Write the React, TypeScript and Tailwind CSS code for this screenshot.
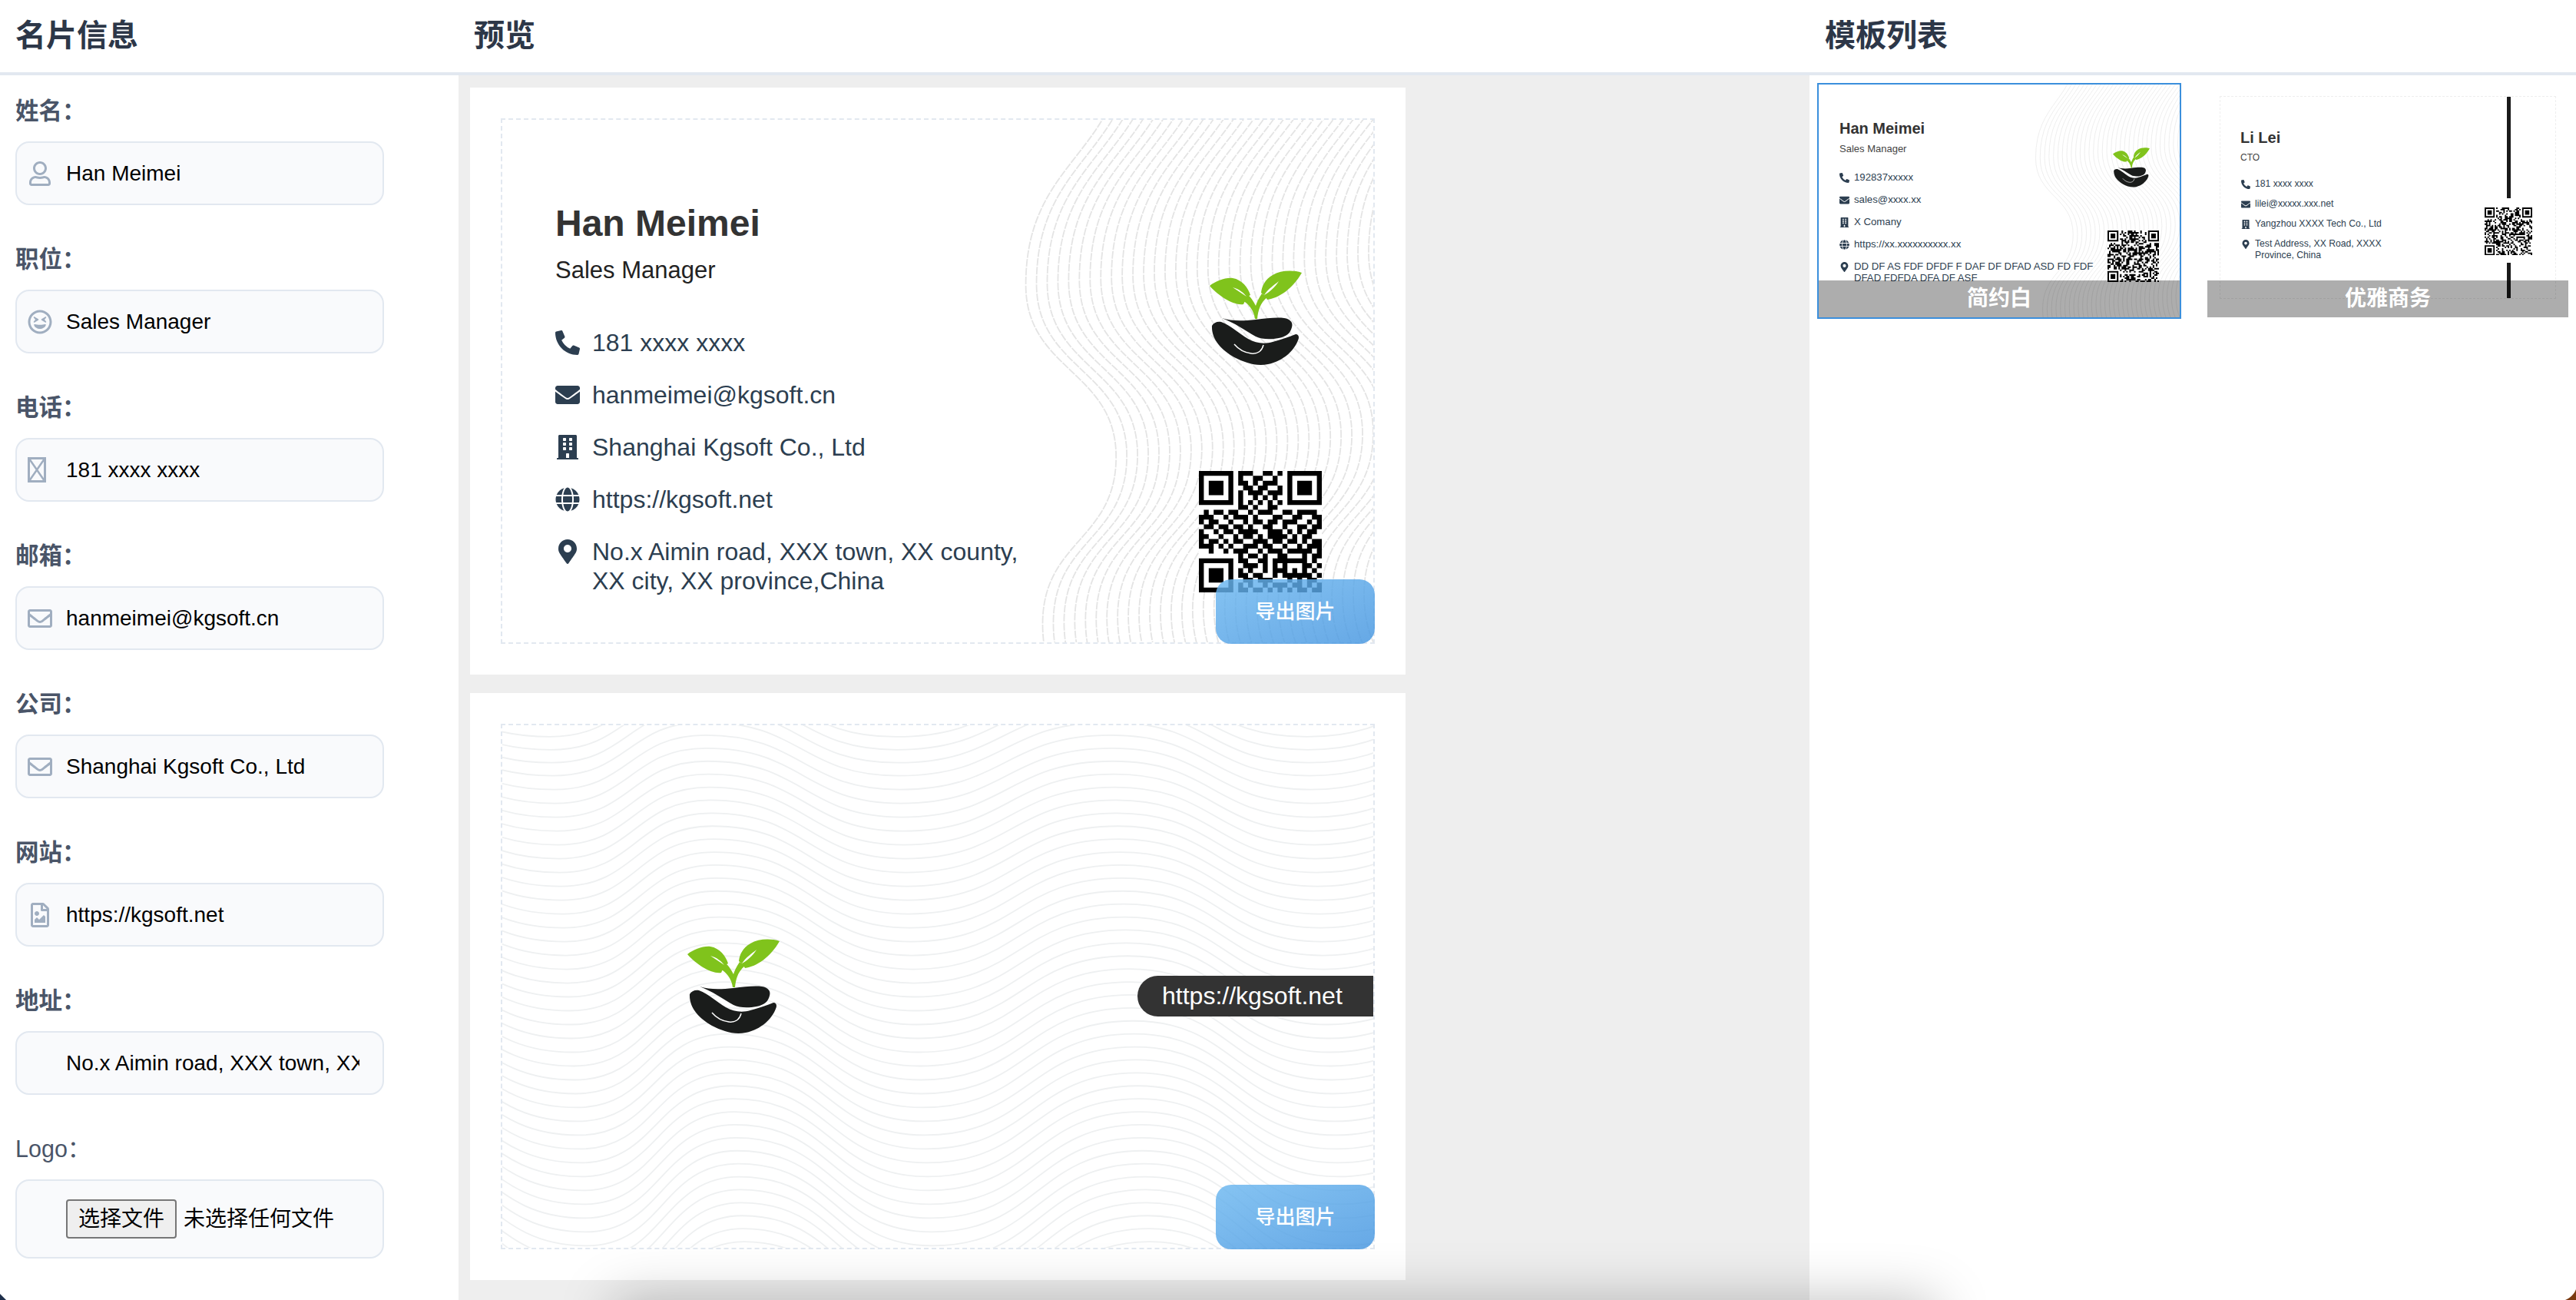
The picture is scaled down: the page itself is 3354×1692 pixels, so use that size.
import type { ReactNode } from "react";
import {
  FaBuilding,
  FaEnvelope,
  FaGlobe,
  FaMapMarkerAlt,
  FaPhoneAlt,
  FaRegEnvelope,
  FaRegFileImage,
  FaRegGrinSquint,
  FaRegUser,
} from "react-icons/fa";

const QR_MAIN = [
  "1111111011100110101111111",
  "1000001010011001001000001",
  "1011101011010111001011101",
  "1011101001101100101011101",
  "1011101010111011101011101",
  "1000001010010101001000001",
  "1111111010101010101111111",
  "0000000011010011000000000",
  "0101101100101110011011110",
  "1110010111010001100110011",
  "1011001001011011011100101",
  "0110110110100110010011011",
  "1001011011110011101010110",
  "1100100101101011110101100",
  "1011010110011101101101011",
  "1110101001110110010010111",
  "0010010111001011101111101",
  "0000000010110100110001011",
  "1111111011001101111111010",
  "1000001001110101010001101",
  "1011101010100101110101010",
  "1011101011011001011111101",
  "1011101001101110001010110",
  "1000001010100101110110101",
  "1111111011011010101011011",
];

// thumbnails just need something qr-looking, denser than the big one
function fakeQr(n: number, seed: number) {
  const rows: string[] = [];
  let s = seed;
  for (let y = 0; y < n; y++) {
    let row = "";
    for (let x = 0; x < n; x++) {
      s = (s * 1103515245 + 12345) & 0x7fffffff;
      let bit = (s >> 16) & 1;
      const corners = [
        [0, 0],
        [n - 7, 0],
        [0, n - 7],
      ];
      for (const [cx, cy] of corners) {
        const dx = x - cx;
        const dy = y - cy;
        if (dx >= -1 && dx <= 7 && dy >= -1 && dy <= 7) {
          const inside = dx >= 0 && dx <= 6 && dy >= 0 && dy <= 6;
          const ring = dx === 0 || dx === 6 || dy === 0 || dy === 6;
          const core = dx >= 2 && dx <= 4 && dy >= 2 && dy <= 4;
          bit = inside && (ring || core) ? 1 : 0;
        }
      }
      row += bit;
    }
    rows.push(row);
  }
  return rows;
}

const QR_THUMB_A = fakeQr(33, 77);
const QR_THUMB_B = fakeQr(33, 4242);

function Qr({ rows, className }: { rows: string[]; className: string }) {
  const n = rows.length;
  let d = "";
  rows.forEach((row, y) => {
    row.split("").forEach((c, x) => {
      if (c === "1") d += `M${x} ${y}h1v1h-1z`;
    });
  });
  return (
    <svg viewBox={`0 0 ${n} ${n}`} preserveAspectRatio="none" className={className}>
      <rect width={n} height={n} fill="#fff" />
      <path d={d} fill="#000" />
    </svg>
  );
}

function Logo({ className }: { className: string }) {
  return (
    <svg viewBox="0 0 120 124" preserveAspectRatio="none" className={className}>
      <path
        d="M0 20C8 14 20 9 30 10C42 12 50 22 53 32C48 34 46 40 44 44C32 46 12 34 0 20Z"
        fill="#80c31c"
      />
      <path
        d="M120 3C108 -1 92 0 82 6C72 12 68 20 67 29C70 31 73 34 75 38C90 36 108 24 120 3Z"
        fill="#80c31c"
      />
      <path d="M44 40C52 44 58 54 59 63H62C63 52 66 42 75 35L68 30C64 36 61 42 60 46C57 40 53 34 50 32Z" fill="#80c31c" />
      <path d="M30 22C38 24 44 29 48 34C42 30 36 26 30 22Z" fill="#fff" />
      <path d="M90 14C84 19 76 24 71 32C78 28 85 22 90 14Z" fill="#fff" />
      <path
        d="M16 62C28 66 42 66 60 64C74 62 88 61 97 62C105 63 109 68 107 74C105 82 100 86 90 88C80 90 68 90 60 86C46 78 32 68 16 62Z"
        fill="#1a1c1b"
      />
      <path
        d="M3 72C5 68 10 66 15 67C28 72 38 82 50 89C60 95 72 96 82 93C94 90 104 86 112 83C116 83 117 87 115 91C110 104 96 118 76 122C60 125 46 120 32 113C16 104 2 90 3 72Z"
        fill="#1a1c1b"
      />
      <path
        d="M32 96C38 103 46 107 54 108C62 109 68 105 70 97"
        fill="none"
        stroke="#fff"
        strokeWidth="1.5"
      />
    </svg>
  );
}

// lines run top to bottom and swing left/right, like the card's guilloche
function verticalWavePaths() {
  const out: string[] = [];
  for (let i = 0; i < 36; i++) {
    const dx = i * 14;
    const dy = -1.3 * i;
    const pts = [
      [815 + dx, -120 + dy],
      [684 + dx, 216 + dy],
      [802 + dx, 441 + dy],
      [706 + dx, 660 + dy],
      [790 + dx, 880 + dy],
    ];
    let d = `M${pts[0][0]} ${pts[0][1]}`;
    for (let p = 1; p < pts.length; p++) {
      const ym = (pts[p - 1][1] + pts[p][1]) / 2;
      d += `C${pts[p - 1][0]} ${ym} ${pts[p][0]} ${ym} ${pts[p][0]} ${pts[p][1]}`;
    }
    out.push(d);
  }
  return out;
}

function horizontalWavePaths() {
  const xs = [-199, 66, 264, 518, 794, 1055, 1320];
  const out: string[] = [];
  for (let j = -10; j < 44; j++) {
    const base = j * 17 - 4;
    const dx = j * 1.3;
    const amp = 70 + Math.max(j, 0) * 1.1; // swing gets bigger towards the bottom
    let d = "";
    xs.forEach((x, k) => {
      const px = x + dx;
      const py = base + (k % 2 === 0 ? 0 : amp);
      if (k === 0) {
        d = `M${px} ${py}`;
      } else {
        const prevX = xs[k - 1] + dx;
        const prevY = base + (k % 2 === 0 ? amp : 0);
        const xm = (prevX + px) / 2;
        d += `C${xm} ${prevY} ${xm} ${py} ${px} ${py}`;
      }
    });
    out.push(d);
  }
  return out;
}

const V_WAVES = verticalWavePaths();
const H_WAVES = horizontalWavePaths();

function Waves({
  paths,
  stroke,
  width,
  dash,
}: {
  paths: string[];
  stroke: string;
  width: number;
  dash?: string;
}) {
  return (
    <svg
      viewBox="0 0 1138 684"
      preserveAspectRatio="none"
      className="absolute inset-0 w-full h-full"
    >
      {paths.map((d, i) => (
        <path
          key={i}
          d={d}
          fill="none"
          stroke={stroke}
          strokeWidth={width}
          strokeDasharray={dash}
          vectorEffect="non-scaling-stroke"
        />
      ))}
    </svg>
  );
}

function ExportButton() {
  return (
    <button className="absolute right-[-2px] bottom-[-2px] w-[207px] h-[84px] rounded-[20px] bg-linear-to-br from-[rgba(106,182,239,0.82)] to-[rgba(68,149,224,0.82)] text-white text-[26px] font-medium">
      导出图片
    </button>
  );
}

function TofuIcon() {
  return (
    <svg viewBox="0 0 24 33" className="w-[24px] h-[33px]" fill="none" stroke="#a0aec0">
      <rect x="1.5" y="1.5" width="21" height="30" strokeWidth="3" />
      <path d="M2 2L22 31M22 2L2 31" strokeWidth="2.5" />
    </svg>
  );
}

const fields: { label: string; value: string; icon?: ReactNode }[] = [
  { label: "姓名：", value: "Han Meimei", icon: <FaRegUser size={32} /> },
  { label: "职位：", value: "Sales Manager", icon: <FaRegGrinSquint size={32} /> },
  { label: "电话：", value: "181 xxxx xxxx", icon: <TofuIcon /> },
  { label: "邮箱：", value: "hanmeimei@kgsoft.cn", icon: <FaRegEnvelope size={32} /> },
  { label: "公司：", value: "Shanghai Kgsoft Co., Ltd", icon: <FaRegEnvelope size={32} /> },
  { label: "网站：", value: "https://kgsoft.net", icon: <FaRegFileImage size={32} /> },
  {
    label: "地址：",
    value: "No.x Aimin road, XXX town, XX county, XX city, XX province,China",
  },
];

function Field({ label, value, icon }: { label: string; value: string; icon?: ReactNode }) {
  return (
    <div>
      <label className="block h-[40px] leading-[40px] mb-[20px] text-[30.5px] font-semibold text-[#4a5568]">
        {label}
      </label>
      <div className="relative h-[83px]">
        {icon && (
          <span className="absolute left-[16px] top-0 h-full flex items-center text-[#a0aec0]">
            {icon}
          </span>
        )}
        <input
          readOnly
          value={value}
          className="w-full h-full pl-[64px] pr-[30px] text-[28px] text-black bg-[#f9fafc] border-2 border-[#e2e8f0] rounded-[18px] outline-none"
        />
      </div>
    </div>
  );
}

const mainRows = [
  { icon: <FaPhoneAlt size={32} />, text: "181 xxxx xxxx" },
  { icon: <FaEnvelope size={32} />, text: "hanmeimei@kgsoft.cn" },
  { icon: <FaBuilding size={32} />, text: "Shanghai Kgsoft Co., Ltd" },
  { icon: <FaGlobe size={32} />, text: "https://kgsoft.net" },
  {
    icon: <FaMapMarkerAlt size={32} />,
    text: "No.x Aimin road, XXX town, XX county, XX city, XX province,China",
  },
];

function FrontCard() {
  return (
    <div className="w-[1218px] h-[764px] bg-white p-[40px]">
      <div className="relative h-full border-2 border-dashed border-[#e2e8f0] flex justify-between">
        <Waves paths={V_WAVES} stroke="#e4e4e4" width={1.8} dash="10 1.5" />
        <div className="relative pl-[69px] pt-[107px]">
          <h2 className="h-[56px] leading-[56px] text-[48px] font-bold text-[#333]">Han Meimei</h2>
          <p className="h-[40px] leading-[40px] mt-[13px] text-[31px] text-[#222]">Sales Manager</p>
          <ul className="mt-[55px] flex flex-col gap-[30px] text-[32px] leading-[38px] text-[#2c3e50]">
            {mainRows.map((row) => (
              <li key={row.text} className="flex items-start gap-[16px]">
                <span className="w-[32px] h-[38px] flex items-center justify-center shrink-0">
                  {row.icon}
                </span>
                <span className="w-[560px]">{row.text}</span>
              </li>
            ))}
          </ul>
        </div>
        <div className="relative flex flex-col items-end pr-[67px] pt-[196px]">
          <Logo className="w-[120px] h-[124px] mr-[26px]" />
          <Qr rows={QR_MAIN} className="w-[160px] h-[158px] mt-[137px]" />
        </div>
        <ExportButton />
      </div>
    </div>
  );
}

function BackCard() {
  return (
    <div className="w-[1218px] h-[764px] bg-white p-[40px]">
      <div className="relative h-full border-2 border-dashed border-[#e2e8f0] flex items-start justify-between">
        <Waves paths={H_WAVES} stroke="#eef0f1" width={1.8} />
        <Logo className="relative w-[120px] h-[124px] ml-[241px] mt-[278px]" />
        <div className="relative mt-[326px] h-[53px] w-[307px] pl-[32px] rounded-l-full bg-[#333] text-white text-[32px] leading-[53px]">
          https://kgsoft.net
        </div>
        <ExportButton />
      </div>
    </div>
  );
}

function ThumbRow({ icon, text }: { icon: ReactNode; text: string }) {
  return (
    <div className="flex items-start gap-[6px]">
      <span className="w-[13px] h-[16px] flex items-center justify-center shrink-0">{icon}</span>
      <span>{text}</span>
    </div>
  );
}

function Thumb({
  title,
  active,
  children,
}: {
  title: string;
  active?: boolean;
  children: ReactNode;
}) {
  return (
    <div
      className={
        active
          ? "relative w-[474px] h-[307px] border-2 border-[#3b8fdc] overflow-hidden"
          : "relative w-[474px] h-[307px] border-2 border-transparent overflow-hidden"
      }
    >
      {children}
      <div className="absolute left-0 right-0 bottom-0 h-[48px] bg-[rgba(0,0,0,0.32)] text-white text-[28px] font-bold leading-[48px] text-center">
        {title}
      </div>
    </div>
  );
}

function ThumbOne() {
  return (
    <div className="relative w-full h-full flex justify-between text-[#2c3e50]">
      <Waves paths={V_WAVES} stroke="#e2e2e2" width={0.6} />
      <div className="relative pl-[27px] pt-[44px] text-[13.2px] leading-[15px]">
        <h3 className="h-[26px] leading-[26px] text-[20px] font-bold text-[#333]">Han Meimei</h3>
        <p className="mt-[6px] h-[16px] leading-[16px] text-[13px] text-[#444]">Sales Manager</p>
        <div className="mt-[21px] flex flex-col gap-[13px] w-[345px]">
          <ThumbRow icon={<FaPhoneAlt size={13} />} text="192837xxxxx" />
          <ThumbRow icon={<FaEnvelope size={13} />} text="sales@xxxx.xx" />
          <ThumbRow icon={<FaBuilding size={13} />} text="X Comany" />
          <ThumbRow icon={<FaGlobe size={13} />} text="https://xx.xxxxxxxxxx.xx" />
          <ThumbRow
            icon={<FaMapMarkerAlt size={13} />}
            text="DD DF AS FDF DFDF F DAF DF DFAD ASD FD FDF DFAD FDFDA DFA DF ASF"
          />
        </div>
      </div>
      <div className="relative flex flex-col items-end pr-[27px] pt-[82px]">
        <Logo className="w-[48px] h-[52px] mr-[12px]" />
        <Qr rows={QR_THUMB_A} className="w-[67px] h-[67px] mt-[56px]" />
      </div>
    </div>
  );
}

function ThumbTwo() {
  return (
    <div className="w-full h-full px-[16px] pt-[15px] pb-[24px]">
      <div className="h-full border border-dashed border-[#eeeeee] flex justify-between text-[#2c3e50]">
        <div className="pl-[26px] pt-[40px] text-[12.2px] leading-[15px]">
          <h3 className="h-[26px] leading-[26px] text-[20px] font-bold text-[#333]">Li Lei</h3>
          <p className="mt-[5px] h-[16px] leading-[16px] text-[12px] text-[#444]">CTO</p>
          <div className="mt-[19px] flex flex-col gap-[10px] w-[190px]">
            <ThumbRow icon={<FaPhoneAlt size={12} />} text="181 xxxx xxxx" />
            <ThumbRow icon={<FaEnvelope size={12} />} text="lilei@xxxxx.xxx.net" />
            <ThumbRow icon={<FaBuilding size={12} />} text="Yangzhou XXXX Tech Co., Ltd" />
            <ThumbRow icon={<FaMapMarkerAlt size={12} />} text="Test Address, XX Road, XXXX Province, China" />
          </div>
        </div>
        <div className="flex flex-col items-center pr-[30px]">
          <div className="w-[5px] h-[133px] bg-[#1a1a1a]" />
          <Qr rows={QR_THUMB_B} className="w-[62px] h-[63px] mt-[12px]" />
          <div className="w-[5px] h-[46px] mt-[10px] bg-[#1a1a1a]" />
        </div>
      </div>
    </div>
  );
}

export default function App() {
  return (
    <div className="relative w-[3354px] h-[1692px] overflow-hidden bg-white flex flex-col font-['Liberation_Sans','Noto_Sans_CJK_SC',sans-serif]">
      <header className="flex h-[98px] shrink-0 border-b-4 border-[#e2e8f0] text-[40px] font-bold text-[#2d3748] leading-[92px]">
        <div className="w-[597px] pl-[20px]">名片信息</div>
        <div className="w-[1759px] pl-[20px]">预览</div>
        <div className="pl-[20px]">模板列表</div>
      </header>

      <div className="flex flex-1 min-h-0">
        <aside className="w-[597px] shrink-0 px-[20px] pt-[26px] pr-[97px] flex flex-col gap-[50px]">
          {fields.map((f) => (
            <Field key={f.label} {...f} />
          ))}
          <div>
            <label className="block h-[40px] leading-[40px] mb-[20px] text-[30.5px] text-[#4a5568]">
              Logo：
            </label>
            <div className="h-[103px] pl-[64px] flex items-center gap-[9px] bg-[#f9fafc] border-2 border-[#e2e8f0] rounded-[18px] text-[28px] text-black">
              <button className="w-[144px] h-[51px] bg-[#efefef] border-2 border-[#767676] rounded-[4px] text-[28px]">
                选择文件
              </button>
              <span>未选择任何文件</span>
            </div>
          </div>
        </aside>

        <main className="w-[1759px] shrink-0 bg-[#eeeeee] pl-[15px] pt-[16px] flex flex-col gap-[24px]">
          <FrontCard />
          <BackCard />
        </main>

        <section className="flex-1 pl-[10px] pt-[10px] flex items-start gap-[32px]">
          <Thumb title="简约白" active>
            <ThumbOne />
          </Thumb>
          <Thumb title="优雅商务">
            <ThumbTwo />
          </Thumb>
        </section>
      </div>

      {/* soft shadow coming up from something below the fold */}
      <div className="absolute left-[800px] top-[1692px] w-[1720px] h-[200px] pointer-events-none shadow-[0_0_70px_rgba(0,0,0,0.25)]" />

      {/* window corners */}
      <svg viewBox="0 0 10 10" className="absolute left-0 bottom-0 w-[10px] h-[10px]">
        <path d="M0 2L8 10H0Z" fill="#1e2f4a" />
      </svg>
      <svg viewBox="0 0 14 14" className="absolute right-0 bottom-0 w-[14px] h-[14px]">
        <path d="M14 0V14H0C6 12 12 6 14 0Z" fill="#7a3a10" />
      </svg>
    </div>
  );
}
